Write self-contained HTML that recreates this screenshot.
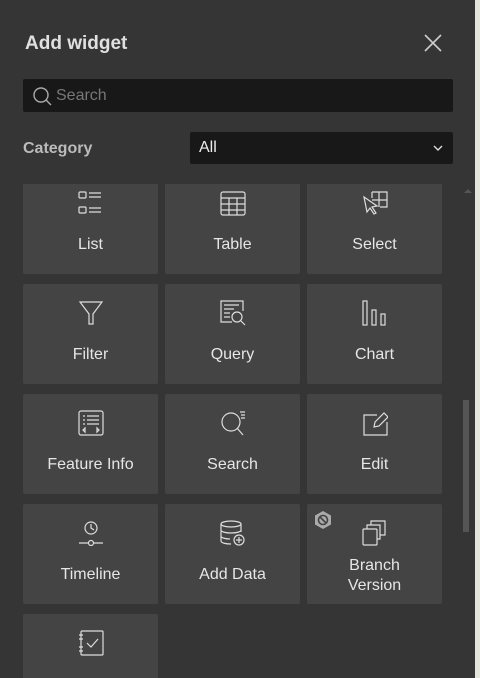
<!DOCTYPE html>
<html><head><style>
*{margin:0;padding:0;box-sizing:border-box}
body{width:480px;height:678px;overflow:hidden;background:#d8dccf;font-family:"Liberation Sans",sans-serif;position:relative}
.panel{position:absolute;left:0;top:0;width:475px;height:678px;background:#353535;overflow:hidden}
.map{position:absolute;left:475px;top:0;width:5px;height:678px;background:#e3e6dc}
h1{position:absolute;left:25px;top:33px;font-size:19px;font-weight:bold;color:#e0e0e0}
.close{position:absolute;left:422px;top:32px}
.search{position:absolute;left:23px;top:79px;width:430px;height:33px;background:#181818;border-radius:2px}
.search span{position:absolute;left:33px;top:8px;color:#777;font-size:16px}
.cat{position:absolute;left:23px;top:140px;color:#bbb;font-size:16px;font-weight:bold}
.dd{position:absolute;left:190px;top:132px;width:263px;height:32px;background:#181818;border-radius:2px;color:#eee;font-size:16px;padding:7px 9px}
.dd svg{position:absolute;right:10px;top:13px}
.grid{position:absolute;left:0;top:184px;width:460px;height:494px;overflow:hidden}
.t{position:absolute;width:135px;height:100px;background:#444;border-radius:2px;color:#e6e6e6;font-size:16px;text-align:center}
.t svg{position:absolute;left:55px;top:16px}
.t .l{position:absolute;left:0;right:0;top:62px}
.sb{position:absolute;left:463px;top:400px;width:6px;height:132px;background:#555}
</style></head><body>
<div class="map"></div>
<div class="panel">
<h1>Add widget</h1>
<svg class="close" width="22" height="22" viewBox="0 0 22 22" stroke="#ccc" stroke-width="1.6"><path d="M3 3L19 19M19 3L3 19"/></svg>
<div class="search"><svg style="position:absolute;left:8px;top:6px" width="22" height="22" viewBox="0 0 22 22" fill="none" stroke="#aaa" stroke-width="1.4"><circle cx="10" cy="10" r="7"/><path d="M15 15L20 20"/></svg><span>Search</span></div>
<div class="cat">Category</div>
<div class="dd">All<svg width="10" height="6" viewBox="0 0 10 6" fill="none" stroke="#ddd" stroke-width="1.4"><path d="M1 1L5 5L9 1"/></svg></div>
<div class="grid">
<div class="t" style="left:23px;top:-10px"><svg width="26" height="26" viewBox="0 0 26 26" fill="none" stroke="#ddd" stroke-width="1.2"><rect x="1" y="2" width="7" height="6" rx="1"/><rect x="1" y="17" width="7" height="6" rx="1"/><path d="M11 3h12M11 7h12M11 18h12M11 22h12"/></svg><div class="l">List</div></div>
<div class="t" style="left:165px;top:-10px"><svg width="26" height="26" viewBox="0 0 26 26" fill="none" stroke="#ddd" stroke-width="1.2"><rect x="1" y="2" width="24" height="23" rx="2"/><path d="M1 8h24M1 14h24M1 20h24M9 8v17M17 8v17"/></svg><div class="l">Table</div></div>
<div class="t" style="left:307px;top:-10px"><svg width="26" height="26" viewBox="0 0 26 26" fill="none" stroke="#ddd" stroke-width="1.2"><path d="M10 2h15v15h-7M10 2v6M17 2v15M10 10h15M2 7l3 15 3-4 4 6 2-1-4-6 5-1z"/></svg><div class="l">Select</div></div>
<div class="t" style="left:23px;top:100px"><svg width="26" height="26" viewBox="0 0 26 26" fill="none" stroke="#ddd" stroke-width="1.2"><path d="M2 2h22l-9 12v10h-4V14z"/></svg><div class="l">Filter</div></div>
<div class="t" style="left:165px;top:100px"><svg width="26" height="26" viewBox="0 0 26 26" fill="none" stroke="#ddd" stroke-width="1.2"><path d="M12 22H1V1h22v10M4 5h15M4 9h10M4 13h6M4 17h6"/><circle cx="17" cy="17" r="5"/><path d="M21 21l4 4"/></svg><div class="l">Query</div></div>
<div class="t" style="left:307px;top:100px"><svg width="26" height="26" viewBox="0 0 26 26" fill="none" stroke="#ddd" stroke-width="1.2"><rect x="1" y="1" width="4" height="24"/><rect x="10" y="10" width="4" height="15"/><rect x="19" y="14" width="4" height="11"/></svg><div class="l">Chart</div></div>
<div class="t" style="left:23px;top:210px"><svg width="26" height="26" viewBox="0 0 26 26" fill="none" stroke="#ddd" stroke-width="1.2"><rect x="1" y="1" width="24" height="24" rx="2"/><path d="M5 6h2M9 6h12M5 10h2M9 10h12M5 14h2M9 14h12M5 20l2-2v4zM21 20l-2-2v4z"/></svg><div class="l">Feature Info</div></div>
<div class="t" style="left:165px;top:210px"><svg width="26" height="26" viewBox="0 0 26 26" fill="none" stroke="#ddd" stroke-width="1.2"><circle cx="11" cy="12" r="9"/><path d="M17 18l6 7M20 2h5M21 5h4M21 8h4"/></svg><div class="l">Search</div></div>
<div class="t" style="left:307px;top:210px"><svg width="26" height="26" viewBox="0 0 26 26" fill="none" stroke="#ddd" stroke-width="1.2"><path d="M15 5H2v20h23V12M12 17l1-5 9-9 4 4-9 9z"/></svg><div class="l">Edit</div></div>
<div class="t" style="left:23px;top:320px"><svg width="26" height="26" viewBox="0 0 26 26" fill="none" stroke="#ddd" stroke-width="1.2"><circle cx="13" cy="8" r="6"/><path d="M13 4v4l3 2M1 23h9M16 23h9"/><circle cx="13" cy="23" r="2.5"/></svg><div class="l">Timeline</div></div>
<div class="t" style="left:165px;top:320px"><svg width="26" height="26" viewBox="0 0 26 26" fill="none" stroke="#ddd" stroke-width="1.2"><ellipse cx="11" cy="4" rx="10" ry="3"/><path d="M1 4v17c0 2 5 3 10 3M21 4v8M1 10c0 2 5 3 10 3s10-1 10-3M1 16c0 2 5 3 9 3"/><circle cx="19" cy="20" r="5"/><path d="M19 17v6M16 20h6"/></svg><div class="l">Add Data</div></div>
<div class="t" style="left:307px;top:320px"><svg style="left:6px;top:6px" width="20" height="20" viewBox="0 0 20 20"><path d="M10 1l8 4.5v9L10 19l-8-4.5v-9z" fill="#aaa"/><circle cx="10" cy="10" r="4.5" fill="none" stroke="#444" stroke-width="1.6"/><path d="M7 7l6 6" stroke="#444" stroke-width="1.6"/></svg><svg width="26" height="26" viewBox="0 0 26 26" fill="none" stroke="#ddd" stroke-width="1.2"><rect x="1" y="9" width="14" height="16" rx="1"/><path d="M5 9V5h13v14h-3M9 5V1h14v14h-5"/></svg><div class="l" style="top:52px;line-height:20px">Branch<br>Version</div></div>
<div class="t" style="left:23px;top:430px"><svg width="26" height="26" viewBox="0 0 26 26" fill="none" stroke="#ddd" stroke-width="1.2"><rect x="3" y="1" width="22" height="24" rx="1"/><path d="M1 5h4M1 9h4M1 17h4M1 21h4M9 13l4 4 7-8"/></svg><div class="l">Survey</div></div>
</div>
<svg style="position:absolute;left:464px;top:188px" width="8" height="5" viewBox="0 0 8 5"><path d="M0 5L4 1L8 5z" fill="#555"/></svg>
<div class="sb"></div>
</div>
</body></html>
